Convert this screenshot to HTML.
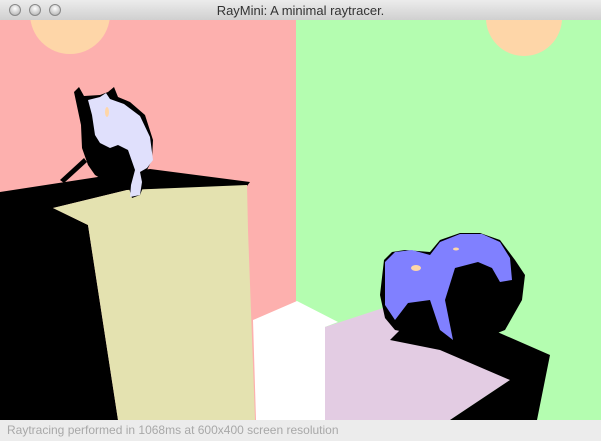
<!DOCTYPE html>
<html><head><meta charset="utf-8"><style>
html,body{margin:0;padding:0;width:601px;height:441px;overflow:hidden;background:#ececec;font-family:"Liberation Sans",sans-serif}
.title{position:absolute;left:0;top:0;width:601px;height:21px;background:linear-gradient(#ececec,#d0d0d0);border-bottom:1px solid #555;box-sizing:border-box}
.title span{position:absolute;left:0;right:0;top:3px;text-align:center;font-size:13px;color:#333}
.btn{position:absolute;top:4px;width:12px;height:12px;border-radius:50%;background:radial-gradient(circle at 50% 35%,#fff,#aaa);border:1px solid #888;box-sizing:border-box}
svg{position:absolute;left:0;top:20px}
.status{position:absolute;left:0;top:420px;width:601px;height:21px;background:#ececec}
.status span{position:absolute;left:7px;top:3px;font-size:12px;color:#a8a8a8}
</style></head><body>
<div class="title"><div class="btn" style="left:9px"></div><div class="btn" style="left:29px"></div><div class="btn" style="left:49px"></div><span>RayMini: A minimal raytracer.</span></div>
<svg width="601" height="400" viewBox="0 20 601 400">
<rect x="0" y="20" width="296" height="400" fill="#fdb0ae"/>
<rect x="296" y="20" width="305" height="400" fill="#b4fdb0"/>
<circle cx="70" cy="14" r="40" fill="#fed6a8"/>
<circle cx="524" cy="18" r="38" fill="#fed6a8"/>
<polygon points="0,192 150,169 250,182 247,186 127,190 53,208 88,225 118,420 0,420" fill="#000"/>
<polygon points="53,208 127,190 247,185 248,230 255,420 118,420 88,225" fill="#e4e2b0"/>
<polygon points="253,320 297,301 338,322 325,327 325,420 256,420" fill="#fff"/>
<polygon points="325,327 383,308 470,330 550,355 510,380 450,420 325,420" fill="#e3cce3"/>
<polygon points="400,330 470,320 550,355 537,420 450,420 510,380 440,350 390,340" fill="#000"/>
<!-- rhino -->
<path d="M74,92 L79,87 84,96 100,95 108,92 114,87 118,97 130,102 145,115 153,140 152,160 146,172 144,185 140,195 132,198 128,185 122,178 112,178 100,178 95,175 88,165 82,148 81,125 Z" fill="#000"/>
<path d="M88,100 L100,97 106,93 110,99 124,104 140,116 150,137 153,160 147,168 140,172 142,182 140,195 130,197 131,185 135,170 128,150 118,145 110,148 100,143 95,135 92,115 Z" fill="#e0e0fc"/>
<ellipse cx="107" cy="112" rx="2" ry="5" fill="#fed6a8"/>
<path d="M60,180 L84,158 87,162 64,183 Z" fill="#000"/>
<!-- elephant -->
<path d="M384,260 L392,252 405,250 430,252 440,240 460,233 480,233 500,240 515,260 525,275 522,300 505,330 485,338 470,345 440,340 420,335 395,330 385,318 380,295 Z" fill="#000"/>
<path d="M385,262 L395,252 412,250 430,255 440,242 460,234 482,234 500,242 510,258 512,280 500,282 492,268 478,262 455,268 445,300 453,340 440,330 430,300 408,303 395,320 385,305 Z" fill="#8080ff"/>
<ellipse cx="416" cy="268" rx="5" ry="3" fill="#fed6a8"/>
<ellipse cx="456" cy="249" rx="3" ry="1.5" fill="#fed6a8"/>
</svg>
<div class="status"><span>Raytracing performed in 1068ms at 600x400 screen resolution</span></div>
</body></html>
